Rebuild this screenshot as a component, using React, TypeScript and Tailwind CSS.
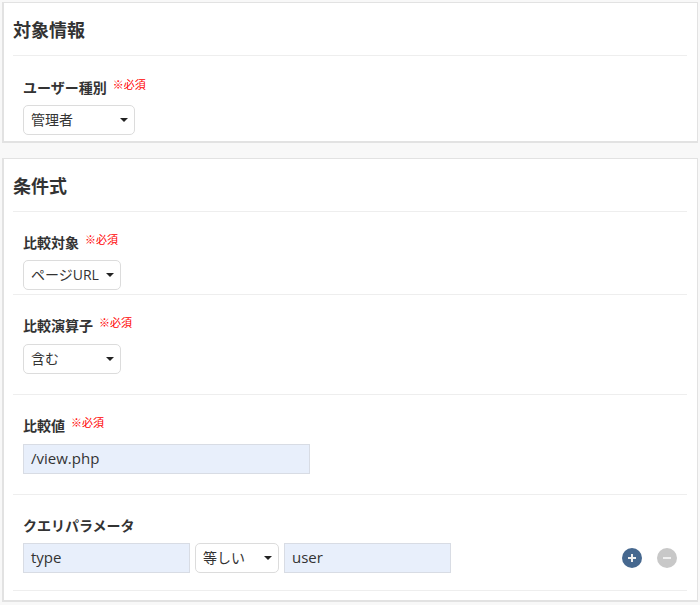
const FONT = 'font-["Open_Sans","Noto_Sans_CJK_JP",sans-serif]'

function Required() {
  return <span className="ml-[6px] text-[11px] font-normal leading-none text-[#ff0000] relative -top-[3px]">※必須</span>
}

function Label({ text, required = true }: { text: string; required?: boolean }) {
  return (
    <div className="flex items-center h-[20px] text-[14px] font-bold text-[#333]">
      <span>{text}</span>
      {required && <Required />}
    </div>
  )
}

function Select({ value, width }: { value: string; width: string }) {
  return (
    <div className={`${width} h-[30px] shrink-0 flex items-center justify-between pl-[7px] pr-[6px] bg-white border border-[#dcdcdc] rounded-[5px] text-[14px] text-[#333]`}>
      <span className="whitespace-nowrap relative -top-[1px]">{value}</span>
      <span className="w-0 h-0 border-x-[4px] border-x-transparent border-t-[4px] border-t-[#222]" />
    </div>
  )
}

function TextBox({ value, width }: { value: string; width: string }) {
  return (
    <div className={`${width} h-[30px] shrink-0 flex items-center pl-[7px] bg-[#e8effb] border border-[#d8dce4] text-[15px] text-[#333]`}>
      <span className="relative -top-[1px]">{value}</span>
    </div>
  )
}

function Title({ text }: { text: string }) {
  return (
    <div className="h-[53px] flex items-center pt-[3px] border-b border-[#eeeeee] text-[18px] font-bold text-[#333]">
      {text}
    </div>
  )
}

function CircleButton({ kind }: { kind: 'plus' | 'minus' }) {
  return (
    <span className={`w-[20px] h-[20px] rounded-full flex items-center justify-center ${kind === 'plus' ? 'bg-[#46688f]' : 'bg-[#c8c8c8]'}`}>
      <svg width="10" height="10" viewBox="0 0 10 10" stroke="#f0f0f0" strokeWidth="2">
        <path d={kind === 'plus' ? 'M1 5h8M5 1v8' : 'M1 5h8'} />
      </svg>
    </span>
  )
}

export default function App() {
  return (
    <div className={`${FONT} w-[700px] h-[605px] overflow-hidden bg-[#f8f8f8] pt-[2px] px-[2px]`}>
      {/* 対象情報 */}
      <section className="w-[696px] h-[141px] bg-white border-2 border-[#e2e2e2] border-t-[1px] border-r-[1px] pl-[9px] pr-[10px]">
        <Title text="対象情報" />
        <div className="pl-[10px] pt-[21px]">
          <Label text="ユーザー種別" />
          <div className="mt-[8px]">
            <Select value="管理者" width="w-[112px]" />
          </div>
        </div>
      </section>

      {/* 条件式 */}
      <section className="mt-[15px] w-[696px] h-[444px] bg-white border-2 border-[#e2e2e2] border-t-[1px] border-r-[1px] pl-[9px] pr-[10px]">
        <Title text="条件式" />
        <div className="pl-[10px] pt-[20px] h-[83px] border-b border-[#eeeeee]">
          <Label text="比較対象" />
          <div className="mt-[8px]">
            <Select value="ページURL" width="w-[98px]" />
          </div>
        </div>
        <div className="pl-[10px] pt-[20px] h-[100px] border-b border-[#eeeeee]">
          <Label text="比較演算子" />
          <div className="mt-[9px]">
            <Select value="含む" width="w-[98px]" />
          </div>
        </div>
        <div className="pl-[10px] pt-[20px] h-[100px] border-b border-[#eeeeee]">
          <Label text="比較値" />
          <div className="mt-[9px]">
            <TextBox value="/view.php" width="w-[287px]" />
          </div>
        </div>
        <div className="pl-[10px] pt-[20px] h-[96px] border-b border-[#eeeeee]">
          <Label text="クエリパラメータ" required={false} />
          <div className="mt-[8px] flex items-center">
            <TextBox value="type" width="w-[167px]" />
            <div className="ml-[5px]">
              <Select value="等しい" width="w-[84px]" />
            </div>
            <div className="ml-[5px]">
              <TextBox value="user" width="w-[167px]" />
            </div>
            <div className="ml-auto mr-[10px] flex items-center gap-[15px]">
              <CircleButton kind="plus" />
              <CircleButton kind="minus" />
            </div>
          </div>
        </div>
      </section>
    </div>
  )
}
